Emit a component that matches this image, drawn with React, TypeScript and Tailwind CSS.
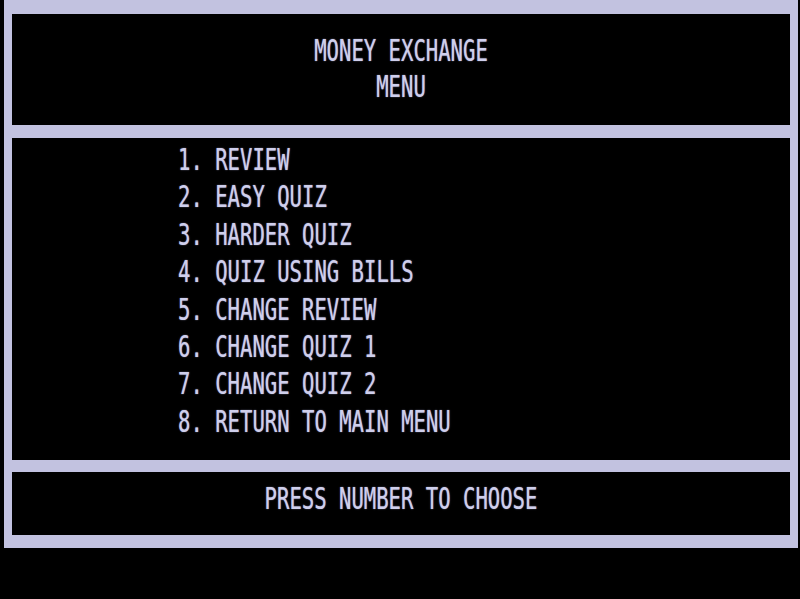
const MENU_ITEMS = [
  "1. REVIEW",
  "2. EASY QUIZ",
  "3. HARDER QUIZ",
  "4. QUIZ USING BILLS",
  "5. CHANGE REVIEW",
  "6. CHANGE QUIZ 1",
  "7. CHANGE QUIZ 2",
  "8. RETURN TO MAIN MENU",
];

function Line({ children, leading }: { children: string; leading: string }) {
  return (
    <div className={`whitespace-pre ${leading} scale-y-[1.5] origin-center`}>{children}</div>
  );
}

export default function App() {
  return (
    <div
      className="h-[599px] w-full bg-black text-[20.6px] font-normal text-[#cfcfec] [text-shadow:0_0_1px_#9a9ac0]"
      style={{ fontFamily: '"DejaVu Sans Mono", "Liberation Mono", monospace' }}
    >
      <div className="ml-[4px] flex w-[794px] flex-col gap-[13px] bg-[#c2c2e0] px-[8px] pt-[14px] pb-[13px]">
        <header className="h-[111px] bg-black pt-[18px] text-center">
          <Line leading="leading-[36px]">MONEY EXCHANGE</Line>
          <Line leading="leading-[36px]">MENU</Line>
        </header>

        <main className="h-[322px] bg-black pt-[4px] pl-[166px]">
          {MENU_ITEMS.map((item) => (
            <Line key={item} leading="leading-[37.4px]">
              {item}
            </Line>
          ))}
        </main>

        <footer className="-mt-[1px] h-[63px] bg-black pt-[8px] text-center">
          <Line leading="leading-[36px]">PRESS NUMBER TO CHOOSE</Line>
        </footer>
      </div>
    </div>
  );
}
